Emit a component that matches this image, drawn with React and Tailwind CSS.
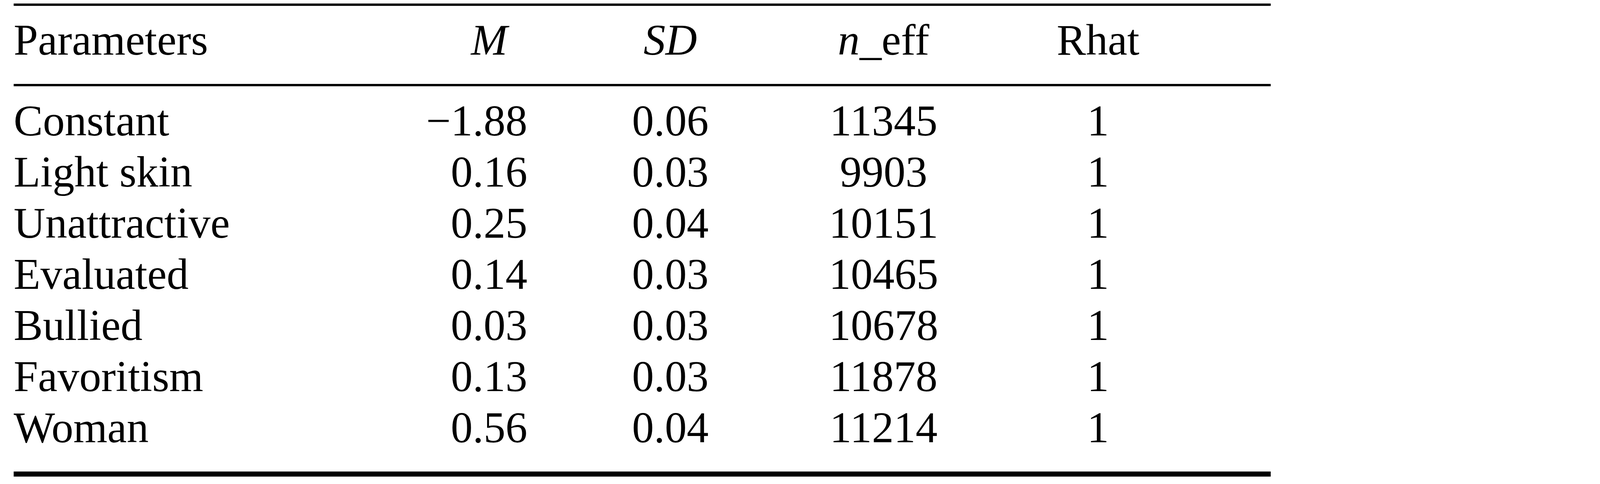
const rows = [
  ['Constant', '−1.88', '0.06', '11345', '1'],
  ['Light skin', '0.16', '0.03', '9903', '1'],
  ['Unattractive', '0.25', '0.04', '10151', '1'],
  ['Evaluated', '0.14', '0.03', '10465', '1'],
  ['Bullied', '0.03', '0.03', '10678', '1'],
  ['Favoritism', '0.13', '0.03', '11878', '1'],
  ['Woman', '0.56', '0.04', '11214', '1'],
];

const cols = 'grid grid-cols-[915px_400px_732px_360px_738px]';

export default function App() {
  return (
    <div className="min-h-screen bg-white text-black font-['Liberation_Serif','Times_New_Roman',serif] text-[112px] leading-[131px]">
      <div className="ml-[35px] w-[3218px] pt-[9px]">
        {/* top rule */}
        <div className="h-[6px] bg-black"></div>

        {/* header */}
        <div className={`${cols} pt-[22px] pb-[47px]`}>
          <div>Parameters</div>
          <div className="text-right pr-[51px] italic">M</div>
          <div className="text-center italic">SD</div>
          <div className="text-center">
            <span className="italic">n</span>_eff
          </div>
          <div className="text-center">Rhat</div>
        </div>

        <div className="h-[6px] bg-black"></div>

        {/* body */}
        <div className="pt-[23px] pb-[47px]">
          {rows.map((r) => (
            <div key={r[0]} className={cols}>
              <div>{r[0]}</div>
              <div className="text-right">{r[1]}</div>
              <div className="text-center">{r[2]}</div>
              <div className="text-center">{r[3]}</div>
              <div className="text-center">{r[4]}</div>
            </div>
          ))}
        </div>

        {/* bottom rule */}
        <div className="h-[13px] bg-black"></div>
      </div>
    </div>
  );
}
